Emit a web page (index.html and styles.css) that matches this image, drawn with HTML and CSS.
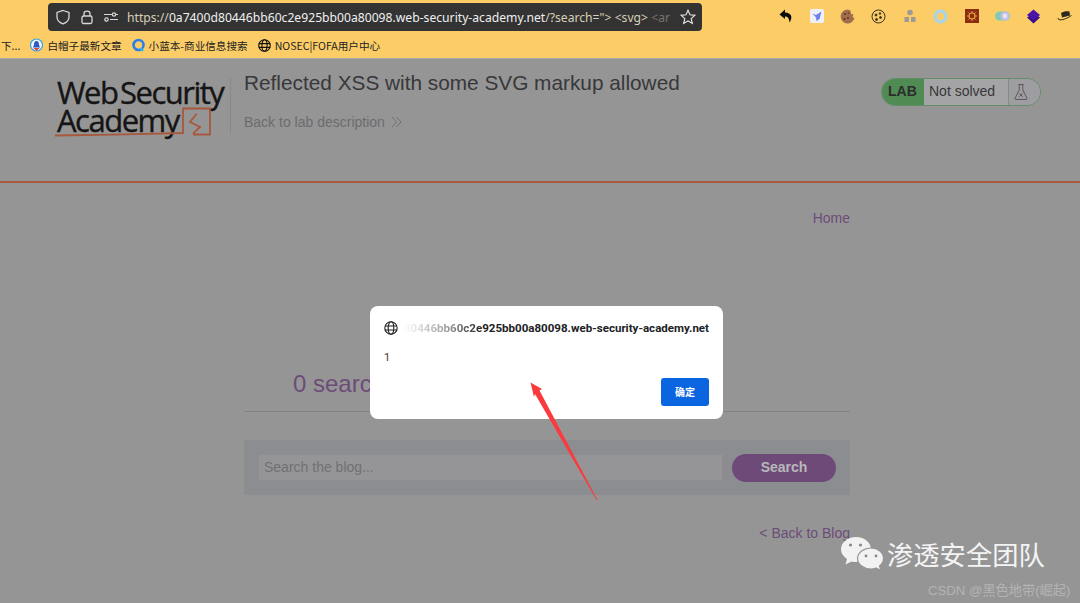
FILE: index.html
```html
<!DOCTYPE html>
<html lang="en">
<head>
    <meta charset="UTF-8">
    <meta name="viewport" content="width=device-width, initial-scale=1.0">
    <title>Reflected XSS with some SVG markup allowed</title>
    <link rel="stylesheet" href="styles.css">
</head>
<body>
    <!-- Browser toolbar -->
    <div class="browser">
        <div class="toolbar">
            <div class="urlbar">
                <svg class="url-icon" width="16" height="16" viewBox="0 0 16 16" fill="none" stroke="#d8d8d8" stroke-width="1.3"><path d="M8 1.5 L14 3.5 V8 C14 11.500 11 13.800 8 14.800 C5 13.800 2 11.500 2 8 V3.500 Z"/></svg>
                <svg class="url-icon" width="16" height="16" viewBox="0 0 16 16" fill="none" stroke="#d8d8d8" stroke-width="1.3"><rect x="3" y="7" width="10" height="7.500" rx="1.500"/><path d="M5 7 V4.500 C5 1.200 11 1.200 11 4.500 V7"/></svg>
                <svg class="url-icon" width="16" height="16" viewBox="0 0 16 16" fill="none" stroke="#d8d8d8" stroke-width="1.2"><path d="M1 5.500 H9 M13 5.500 H15 M7 10.500 H15"/><circle cx="11" cy="5.500" r="1.700"/><circle cx="3.500" cy="10.500" r="1.700"/></svg>
                <span class="url-text"><span class="url-dim">https://</span>0a7400d80446bb60c2e925bb00a80098.web-security-academy.net<span class="url-dim">/?search="&gt; &lt;svg&gt; <span class="url-fade">&lt;ar</span></span></span>
                <svg class="url-star" width="16" height="16" viewBox="0 0 16 16" fill="none" stroke="#e0e0e0" stroke-width="1.2"><path d="M8 1.300 L10 5.800 L14.900 6.300 L11.200 9.600 L12.300 14.400 L8 11.900 L3.700 14.400 L4.800 9.600 L1.100 6.300 L6 5.800 Z"/></svg>
            </div>
            <div class="extensions">
                <svg width="14" height="14" viewBox="0 0 14 14"><path d="M6 .5 L.5 5.500 L6 10 V7.500 C8.500 7.500 10 8.500 10.500 13.500 C13.500 9.500 13.500 3.800 6 3.500 Z" fill="#0c0c0c"/></svg>
                <svg width="14" height="14" viewBox="0 0 14 14"><rect width="14" height="14" rx="2" fill="#eef0fb"/><path d="M2.500 4.500 L6 6 L11.500 2.500 L9.500 10 L6.500 12 L6 8.500 Z" fill="#6f7ff0"/></svg>
                <svg width="15" height="15" viewBox="0 0 15 15"><path d="M7.500 .5 A7 7 0 1 0 14.500 9 L12.500 8 L13.500 5.500 L11 5 L10.500 1.500 Z" fill="#a06e4c"/><circle cx="5" cy="5" r="1" fill="#5a3320"/><circle cx="8" cy="9" r="1" fill="#5a3320"/><circle cx="4.500" cy="10" r="1" fill="#5a3320"/><circle cx="8.500" cy="4" r=".8" fill="#5a3320"/></svg>
                <svg width="15" height="15" viewBox="0 0 15 15" fill="none" stroke="#3a3320" stroke-width="1"><circle cx="7.500" cy="7.500" r="6.500"/><circle cx="5" cy="6" r="1" fill="#3a3320"/><circle cx="9" cy="4.500" r=".8" fill="#3a3320"/><circle cx="9.500" cy="8.500" r="1" fill="#3a3320"/><circle cx="5.500" cy="10.500" r="1" fill="#3a3320"/></svg>
                <svg width="14" height="14" viewBox="0 0 14 14" fill="#9c9a94"><circle cx="7" cy="3.500" r="2.800"/><path d="M1.500 8 H6 V13 H1.500 Z M8 8 H12.500 V13 H8 Z"/></svg>
                <svg width="15" height="15" viewBox="0 0 15 15" fill="none"><circle cx="7.500" cy="7.500" r="5.300" stroke="#a5d4ec" stroke-width="3.200"/></svg>
                <svg width="14" height="14" viewBox="0 0 14 14"><rect width="14" height="14" fill="#8a2d10"/><circle cx="7" cy="7" r="3" fill="none" stroke="#e8a03c" stroke-width="1.200"/><path d="M7 2 V4 M7 10 V12 M2 7 H4 M10 7 H12 M3.500 3.500 L5 5 M9 9 L10.500 10.500 M3.500 10.500 L5 9 M9 5 L10.500 3.500" stroke="#e8a03c"/></svg>
                <svg width="15" height="10" viewBox="0 0 15 10"><rect width="15" height="9" y=".5" rx="4.500" fill="#7ecbb5"/><circle cx="10" cy="5" r="4.500" fill="#c6bde6"/><circle cx="10" cy="5" r="2.400" fill="#e4e2f2"/></svg>
                <svg width="15" height="15" viewBox="0 0 15 15"><path d="M1 8.500 L7.500 14.500 L14 8.500 L7.500 4 Z" fill="#35108a"/><path d="M7.500 .5 L14 6 L7.500 11.500 L1 6 Z" fill="#4a14a8"/></svg>
                <svg width="15" height="12" viewBox="0 0 15 12"><path d="M4 3 C7 1 10 1 12.500 1.500 L13 5.500 L5 7.500 Z" fill="#2c2a20"/><path d="M1 8 C1 11 7 10.500 14.500 5.500" fill="none" stroke="#2c2a20"/></svg>
            </div>
        </div>
        <div class="bookmarks">
            <span class="bookmark bookmark-cut">下...</span>
            <span class="bookmark">
                <svg width="13" height="14" viewBox="0 0 13 14"><circle cx="6.500" cy="7" r="6" fill="#f4f6fa" stroke="#3aa4e0" stroke-width="1.200"/><path d="M6.500 3 C4.500 3 4 5 4 7 L3 9.500 H10 L9 7 C9 5 8.500 3 6.500 3 Z" fill="#2b59c9"/><path d="M3.500 10 H9.500 L6.500 13 Z" fill="#e0453a"/></svg>
                白帽子最新文章
            </span>
            <span class="bookmark">
                <svg width="13" height="14" viewBox="0 0 13 14" fill="none"><circle cx="6.500" cy="7" r="5" stroke="#2b7fe8" stroke-width="2.600"/><path d="M8.500 10 L11 13" stroke="#2bb5e8" stroke-width="2.200"/></svg>
                小蓝本-商业信息搜索
            </span>
            <span class="bookmark">
                <svg class="globe" width="13" height="13" viewBox="0 0 14 14" fill="none" stroke="#111" stroke-width="1.200"><circle cx="7" cy="7" r="6.200"/><ellipse cx="7" cy="7" rx="2.800" ry="6.200"/><path d="M.8 5 H13.200 M.8 9 H13.200"/></svg>
                NOSEC|FOFA用户中心
            </span>
        </div>
    </div>

    <!-- Lab page, dimmed by the alert -->
    <div class="page">
        <header class="lab-header">
            <div class="logo">
                <div class="logo-line">Web Security</div>
                <div class="logo-line">Academy</div>
                <svg class="logo-mark" width="158" height="30" viewBox="0 0 158 30" fill="none" stroke="#a8583c" stroke-width="1.800"><path d="M0 28.500 C40 28 90 27 128 26 V1.500 H155 V27.500 H138 M141.700 6.700 L135 15 L145 20 L138 26.700"/></svg>
            </div>
            <div class="lab-title">
                <h1>Reflected XSS with some SVG markup allowed</h1>
                <a class="back-desc">Back to lab description
                    <svg width="11" height="12" viewBox="0 0 11 12" fill="none" stroke="#707072"><path d="M1 1 L5.500 6 L1 11 M5.500 1 L10 6 L5.500 11"/></svg>
                </a>
            </div>
            <div class="lab-status">
                <span class="status-lab">LAB</span>
                <span class="status-text">Not solved</span>
                <span class="status-flask">
                    <svg width="14" height="18" viewBox="0 0 16 19" fill="none" stroke="#48484a" stroke-width=".9"><path d="M5 1 H11 M6 1 V7 L1 17 Q1 18 2 18 H14 Q15 18 15 17 L10 7 V1 M6 11 L10 15 M10 11 L6 15"/></svg>
                </span>
            </div>
        </header>

        <main class="content">
            <nav class="top-nav"><a>Home</a></nav>
            <h2 class="results">0 search results for ''</h2>
            <form class="search-box">
                <div class="search-input">Search the blog...</div>
                <div class="search-btn">Search</div>
            </form>
            <div class="back-blog"><a>&lt; Back to Blog</a></div>
        </main>
    </div>

    <!-- Alert dialog -->
    <div class="dialog">
        <div class="dialog-origin">
            <svg width="14" height="14" viewBox="0 0 14 14" fill="none" stroke="#222" stroke-width="1.100"><circle cx="7" cy="7" r="6.200"/><ellipse cx="7" cy="7" rx="2.800" ry="6.200"/><path d="M.8 5 H13.200 M.8 9 H13.200"/></svg>
            <span class="origin-text"><span class="origin-fade">80446bb60c2e</span>925bb00a80098.web-security-academy.net</span>
        </div>
        <div class="dialog-msg">1</div>
        <div class="dialog-actions"><span class="dialog-ok">确定</span></div>
    </div>

    <!-- Annotation arrow drawn over the screenshot -->
    <svg class="arrow" width="70" height="120" viewBox="0 0 70 120"><path d="M.5 .5 L12 7 L9.500 8.500 L67.500 118 L66.500 118 L5 12 L4 15 Z" fill="#fb3a3e"/></svg>

    <!-- Watermark -->
    <div class="watermark">
        <svg class="wechat" width="44" height="36" viewBox="0 0 44 36">
            <path d="M16 1 C24.500 1 31 6.500 31 13.500 C31 20.500 24.500 26 16 26 C14.500 26 13 25.800 11.500 25.400 L5.500 28.500 L7 23 C3.500 20.500 1 17.500 1 13.500 C1 6.500 7.500 1 16 1 Z" fill="#f2f2f2"/>
            <path d="M31 12 C38 12 43.500 16.500 43.500 22.500 C43.500 25.500 42 28 39.500 30 L41 34.500 L36 32 C34.500 32.500 32.800 33 31 33 C24 33 17.500 28.500 17.500 22.500 C17.500 16.500 24 12 31 12 Z" fill="#f2f2f2" stroke="#959596" stroke-width="1.200"/>
            <circle cx="10.500" cy="9" r="1.600" fill="#8a8a8a"/><circle cx="20.500" cy="9" r="1.600" fill="#8a8a8a"/>
            <circle cx="26" cy="20" r="1.400" fill="#8a8a8a"/><circle cx="36" cy="20" r="1.400" fill="#8a8a8a"/>
        </svg>
        <span class="wm-name">渗透安全团队</span>
    </div>
    <div class="csdn">CSDN @黑色地带(崛起)</div>
</body>
</html>
```

FILE: styles.css
```css
* {
    box-sizing: border-box;
}
html, body {
    margin: 0;
    height: 603px;
    overflow: hidden;
}
body {
    position: relative;
    font-family: 'Liberation Sans', 'Noto Sans CJK SC', sans-serif;
    background-color: #959596;
}

/* Browser chrome */
.browser {
    height: 59px;
    background-color: #fccd67;
    border-bottom: 1px solid #a8a8a8;
}
.toolbar {
    display: flex;
    align-items: center;
    height: 32px;
    padding: 2px 0 0 48px;
}
.urlbar {
    display: flex;
    align-items: center;
    width: 654px;
    height: 28px;
    padding: 0 6px 0 7px;
    background-color: #333333;
    border-radius: 4px;
}
.url-icon {
    margin-right: 8px;
    flex-shrink: 0;
}
.url-text {
    flex: 1;
    white-space: nowrap;
    font-family: 'Noto Sans', sans-serif;
    font-size: 12.17px;
    color: #f0f0f0;
}
.url-dim {
    color: #d8cfb8;
}
.url-fade {
    color: #77736a;
}
.extensions {
    display: grid;
    grid-template-columns: repeat(10, 31px);
    justify-items: center;
    align-items: center;
    margin: -2px 0 0 68px;
}
.bookmarks {
    display: flex;
    align-items: center;
    height: 26px;
    font-family: 'Noto Sans CJK SC', sans-serif;
    font-size: 10.6px;
    color: #222;
}
.bookmark {
    display: flex;
    align-items: center;
    gap: 4px;
    margin-right: 10px;
    white-space: nowrap;
}
.bookmark-cut {
    margin-left: 1px;
    margin-right: 10px;
}

/* Lab header */
.lab-header {
    display: flex;
    height: 124px;
    padding: 19px 39px 0 57px;
    border-bottom: 2px solid #a8583c;
}
.logo {
    position: relative;
    width: 174px;
    height: 55px;
    border-right: 1px solid #88888a;
    color: #151515;
    font-family: 'Open Sans', sans-serif;
    font-size: 31px;
    line-height: 28px;
    letter-spacing: -1.5px;
    word-spacing: -4px;
    white-space: nowrap;
    -webkit-text-stroke: .4px #151515;
}
.logo-mark {
    position: absolute;
    left: -2px;
    top: 29px;
}
.lab-title {
    flex: 1;
    padding: 0 0 0 13px;
}
.lab-title h1 {
    margin: -8px 0 0;
    font-size: 20.8px;
    font-weight: 400;
    line-height: 26px;
    color: #38383a;
}
.back-desc {
    display: flex;
    align-items: center;
    gap: 6px;
    margin-top: 18px;
    font-size: 14px;
    color: #6c6c6e;
}
.lab-status {
    display: flex;
    align-items: stretch;
    width: 160px;
    height: 28px;
    border: 1px solid #5f8f63;
    border-radius: 14px;
    overflow: hidden;
    font-size: 14px;
    line-height: 25px;
}
.status-lab {
    width: 42px;
    padding-left: 6px;
    background-color: #4f8b52;
    font-weight: 700;
    color: #2c2c2e;
}
.status-text {
    width: 84px;
    padding-left: 5px;
    background-color: #a4a4a6;
    color: #38383a;
}
.status-flask {
    display: flex;
    flex: 1;
    padding: 4px 0 0 5px;
    border-left: 1px solid #7f8f80;
    background-color: #9e9ea2;
}

/* Blog content */
.content {
    width: 606px;
    margin-left: 244px;
}
.top-nav {
    padding-top: 27px;
    text-align: right;
    font-size: 14px;
    color: #6d4c78;
}
.results {
    margin: 143px 0 0;
    height: 43px;
    padding-left: 49px;
    border-bottom: 1px solid #838385;
    font-size: 24px;
    font-weight: 400;
    line-height: 30px;
    color: #6d4c78;
}
.search-box {
    display: flex;
    align-items: center;
    height: 55px;
    margin: 28px 0 0;
    padding: 0 14px;
    background-color: #8c8d90;
}
.search-input {
    width: 465px;
    height: 27px;
    padding-left: 5px;
    background-color: #959597;
    border: 1px solid #8e8e90;
    font-size: 14px;
    line-height: 25px;
    color: #707072;
}
.search-btn {
    width: 104px;
    height: 28px;
    margin-left: 9px;
    background-color: #6e4a78;
    border-radius: 14px;
    text-align: center;
    font-size: 14px;
    font-weight: 700;
    line-height: 27px;
    color: #b8b8ba;
}
.back-blog {
    margin-top: 30px;
    text-align: right;
    font-size: 14px;
    color: #6d4c78;
}

/* Alert dialog */
.dialog {
    position: absolute;
    left: 370px;
    top: 306px;
    width: 353px;
    height: 113px;
    padding: 14px 14px 0;
    background-color: #ffffff;
    border-radius: 8px;
}
.dialog-origin {
    display: flex;
    align-items: center;
    height: 15px;
}
.origin-text {
    margin-left: 6px;
    font-family: 'Roboto', sans-serif;
    font-size: 11.55px;
    font-weight: 700;
    white-space: nowrap;
    color: #202124;
}
.origin-fade {
    background: linear-gradient(90deg, #ffffff, #9a9a9a 55%, #202124);
    -webkit-background-clip: text;
    background-clip: text;
    color: transparent;
}
.dialog-msg {
    margin-top: 16px;
    font-family: 'Roboto', sans-serif;
    font-size: 11px;
    color: #4a3a20;
}
.dialog-actions {
    display: flex;
    justify-content: flex-end;
    margin-top: 14px;
}
.dialog-ok {
    width: 48px;
    height: 28px;
    background-color: #0b65e0;
    border-radius: 3px;
    text-align: center;
    font-family: 'Noto Sans CJK SC', sans-serif;
    font-size: 10px;
    font-weight: 700;
    line-height: 28px;
    color: #ffffff;
}

/* Red arrow */
.arrow {
    position: absolute;
    left: 530px;
    top: 382px;
}

/* Watermark */
.watermark {
    position: absolute;
    left: 840px;
    top: 536px;
    display: flex;
    align-items: center;
    gap: 3px;
}
.wm-name {
    font-family: 'Noto Sans CJK SC', sans-serif;
    font-size: 26.3px;
    line-height: 36px;
    color: #f4f4f4;
}
.csdn {
    position: absolute;
    left: 928px;
    top: 580px;
    font-size: 13.2px;
    color: #b4b4b4;
    white-space: nowrap;
}
```
